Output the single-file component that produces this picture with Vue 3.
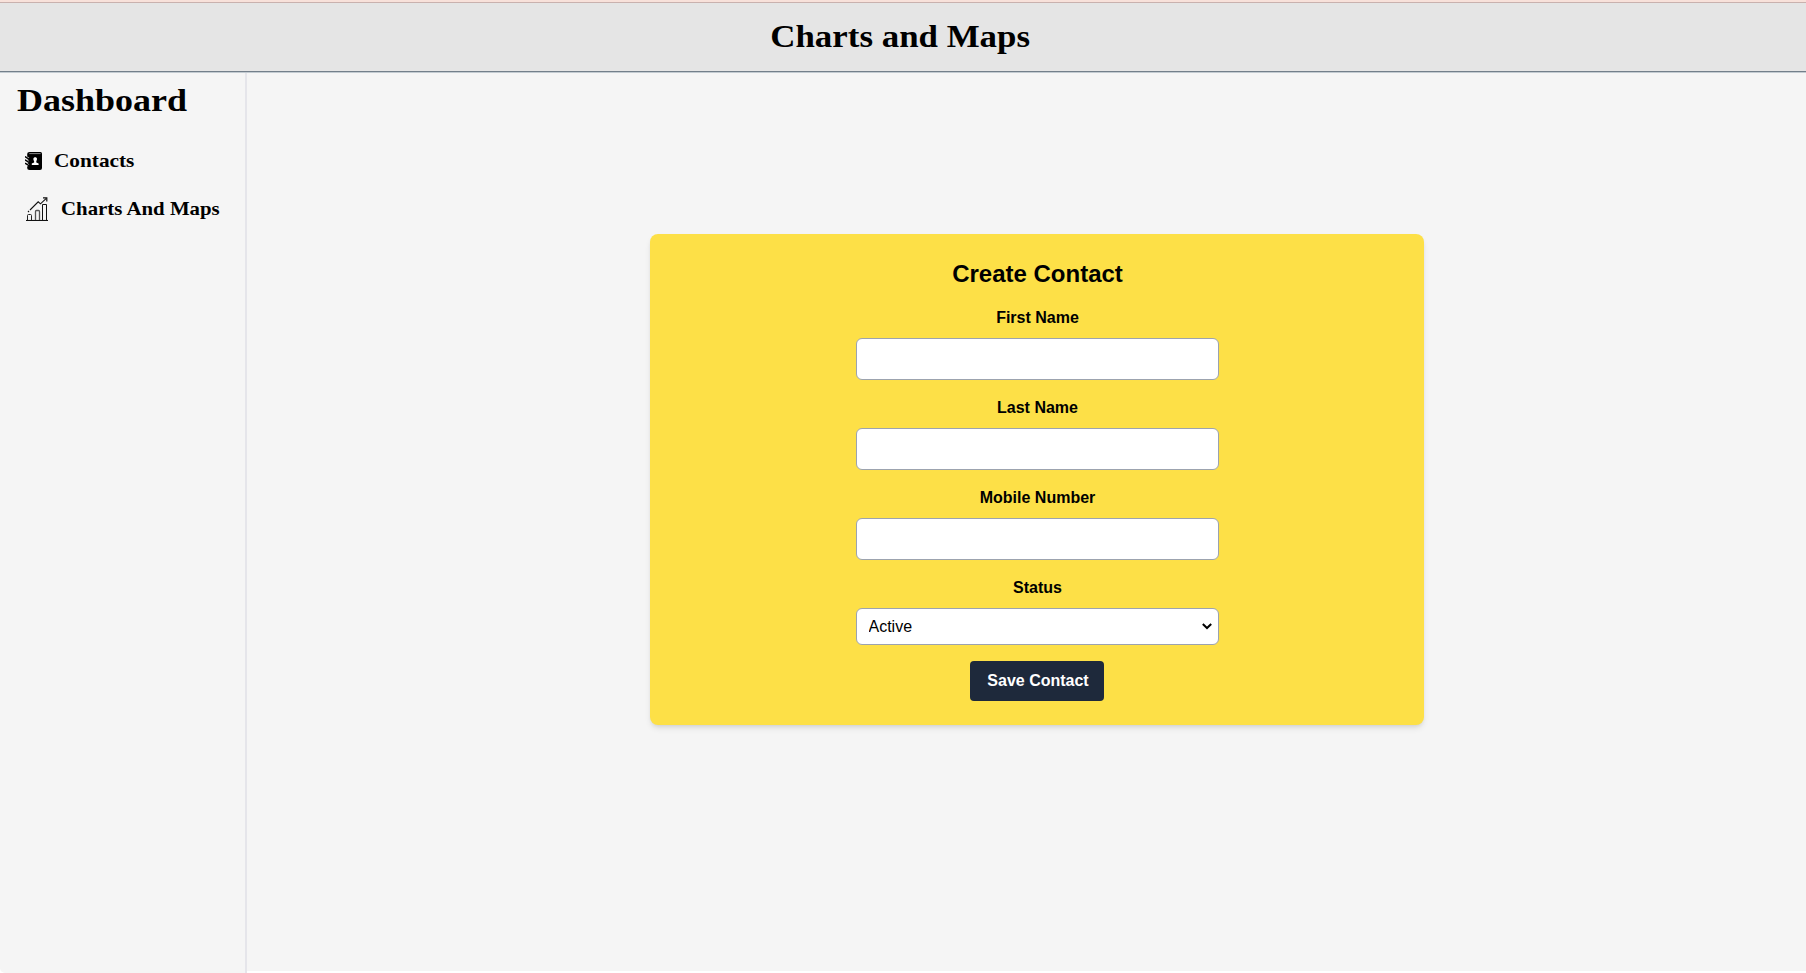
<script setup>
import { ref } from 'vue'

const fields = ['First Name', 'Last Name', 'Mobile Number']
const values = ref(['', '', ''])
const status = ref('Active')
</script>

<template>
  <div class="page">
    <header class="header"><h1 class="title">Charts and Maps</h1></header>
    <div class="body">
      <aside class="sidebar">
        <h2 class="brand">Dashboard</h2>
        <nav class="nav">
          <a class="link contacts">
            <svg width="18" height="18" viewBox="0 0 18 18">
              <path d="M4.5 0H15.5Q17 0 17 1.5V16Q17 18 15 18H4.5Q2.2 18 2.2 16V2Q2.2 0 4.5 0Z" fill="#000" />
              <path d="M4.3 1.6H15.6" stroke="#aaa" stroke-width="0.8" />
              <path d="M0 4.8L3.6 6.8M0 8.1L3.6 10.1M0 11.4L3.6 13.4" stroke="#f5f5f5" stroke-width="2.6" />
              <path d="M0.4 4.8L3.6 6.8M0.4 8.1L3.6 10.1M0.4 11.4L3.6 13.4" stroke="#000" stroke-width="1.4" stroke-linecap="round" />
              <path d="M10.2 5.2C12.3 5.2 12.4 7.6 11.3 9V10.4L13.6 11.4V13H6.8V11.4L9.1 10.4V9C8 7.6 8.1 5.2 10.2 5.2Z" fill="#fff" />
            </svg>
            <span class="label">Contacts</span>
          </a>
          <a class="link charts">
            <svg width="23" height="24" viewBox="0 0 23 24" fill="none" stroke="#111">
              <path d="M0 23.5H22" stroke-width="1.1" />
              <path d="M1.5 23V18.5Q1.5 17.5 2.5 17.5H4.5Q5.5 17.5 5.5 18.5V23" stroke="#222" />
              <path d="M9.5 23V14.5Q9.5 13.5 10.5 13.5H12.5Q13.5 13.5 13.5 14.5V23" stroke="#555" stroke-width="1.3" />
              <path d="M16.5 23V7.5H20.5V23" />
              <path d="M2 15L3 14M4 13L12.2 4.8L14.5 6.8L20.3 1.3" stroke-width="1.1" />
              <path d="M17 .8H20.8V4.5" stroke-width="1.2" />
            </svg>
            <span class="label">Charts And Maps</span>
          </a>
        </nav>
      </aside>
      <main class="main">
        <form class="card" @submit.prevent>
          <h2 class="heading">Create Contact</h2>
          <div v-for="(name, i) in fields" :key="name" class="field">
            <label :for="'field' + i">{{ name }}</label>
            <input :id="'field' + i" v-model="values[i]" type="text" />
          </div>
          <div class="field">
            <label for="status">Status</label>
            <div class="select-wrap">
              <select id="status" v-model="status">
                <option>Active</option>
                <option>Inactive</option>
              </select>
              <svg class="chevron" width="10" height="7" viewBox="0 0 10 7" fill="none" stroke="#000" stroke-width="2">
                <path d="M0.8 1L5 5L9.2 1" />
              </svg>
            </div>
          </div>
          <button class="save">Save Contact</button>
        </form>
      </main>
    </div>
  </div>
</template>

<style>
body {
  margin: 0;
  background: #fff;
}
</style>

<style scoped>
* {
  box-sizing: border-box;
}
.page {
  height: 973px;
  overflow: hidden;
  display: flex;
  flex-direction: column;
  color: #000;
  border-top: 2px solid #f8e1da;
  font-family: "Liberation Sans", Arial, sans-serif;
}
.header {
  height: 70px;
  flex: none;
  display: flex;
  justify-content: center;
  position: relative;
  padding: 15px 5px 0 0;
  background: #e5e5e5;
  border-top: 1px solid #c9b1ae;
  border-bottom: 1px solid #737f8a;
  box-shadow: 0 1px 0 #c3cbd1;
}
.title,
.brand,
.label {
  margin: 0;
  font-family: "Liberation Serif", "Times New Roman", serif;
  font-weight: 700;
  white-space: nowrap;
}
.title {
  font-size: 32px;
  line-height: 36px;
  transform: scaleX(1.09);
}
.body {
  flex: 1;
  display: flex;
  min-height: 0;
}
.sidebar {
  width: 247px;
  flex: none;
  padding: 10px 0 0 17px;
  background: #f5f5f5;
  border-right: 2px solid #e5e5ea;
  border-bottom-left-radius: 5px;
}
.brand {
  font-size: 32px;
  line-height: 36px;
  transform: scaleX(1.125);
  transform-origin: left;
}
.nav {
  display: flex;
  flex-direction: column;
  padding: 34px 0 0 8px;
}
.link {
  display: flex;
  align-items: center;
  height: 18px;
}
.link svg {
  flex: none;
}
.contacts {
  gap: 11px;
}
.charts {
  height: 24px;
  margin: 27px 0 0 1px;
  gap: 12px;
}
.label {
  font-size: 19px;
  line-height: 22px;
  transform: scaleX(1.12);
  transform-origin: left;
}
.charts .label {
  transform: scaleX(1.097);
}
.main {
  flex: 1;
  display: flex;
  justify-content: center;
  align-items: flex-start;
  padding: 162px 0 0 21px;
  margin-bottom: 2px;
  background: #f5f5f5;
}
.card {
  width: 774px;
  padding: 24px;
  display: flex;
  flex-direction: column;
  align-items: center;
  gap: 16px;
  background: #fde047;
  border-radius: 8px;
  box-shadow: 0 4px 6px -1px rgba(0, 0, 0, 0.1), 0 2px 4px -2px rgba(0, 0, 0, 0.1);
}
.heading {
  margin: 0;
  padding-left: 1px;
  font-size: 24px;
  line-height: 32px;
}
.field {
  width: 363px;
  display: flex;
  flex-direction: column;
  gap: 8px;
}
.field label {
  padding-left: 1px;
  font-size: 16px;
  line-height: 24px;
  font-weight: 700;
  text-align: center;
}
input,
select {
  display: block;
  width: 100%;
  height: 42px;
  padding: 8px 12px;
  border: 1px solid #9ca3af;
  border-radius: 6px;
  background: #fff;
  color: #000;
  font: 16px "Liberation Sans", Arial, sans-serif;
}
select {
  height: 37px;
  appearance: none;
}
.select-wrap {
  position: relative;
}
.chevron {
  position: absolute;
  right: 7px;
  top: 15px;
  pointer-events: none;
}
.save {
  width: 134px;
  height: 40px;
  padding: 0 0 0 2px;
  border: 0;
  border-radius: 4px;
  background: #1e293b;
  color: #fff;
  font: 700 16px/24px "Liberation Sans", Arial, sans-serif;
}
</style>
